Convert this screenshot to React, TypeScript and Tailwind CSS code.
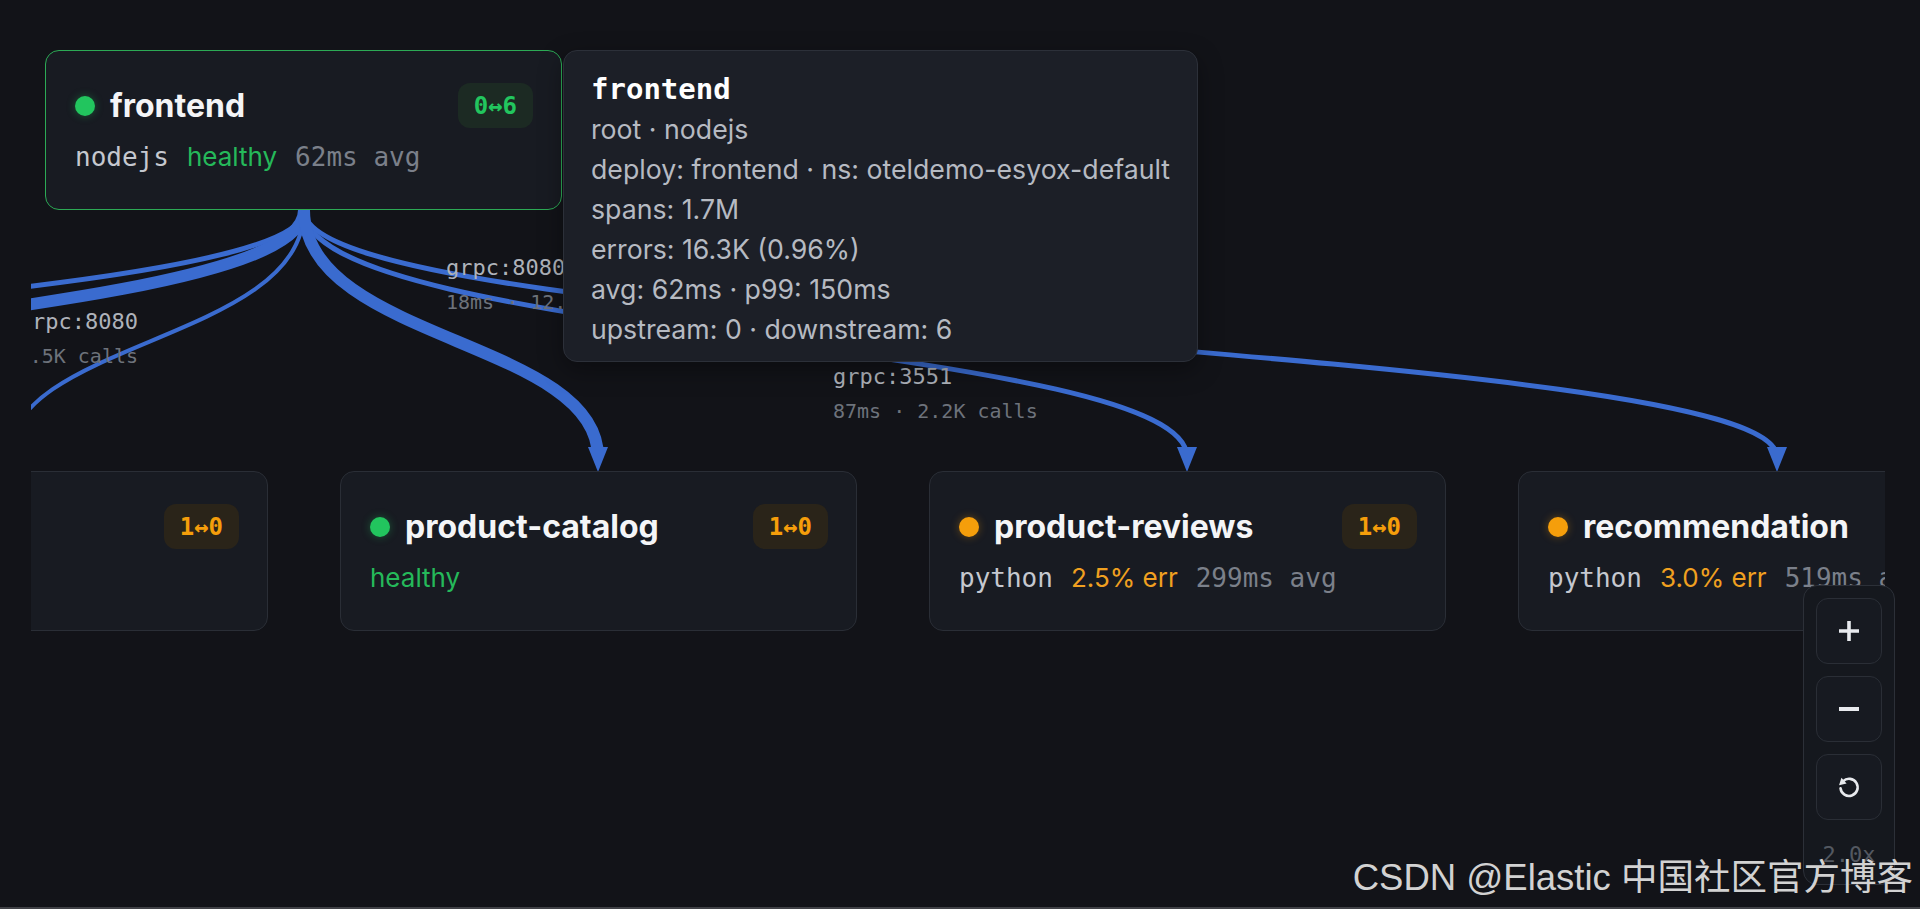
import React from "react";

type Tone = "ok" | "warn";

type Part = { text: string; kind: "mono" | "dim" | "ok" | "warn" };

interface NodeData {
  name: string;
  pos: string;
  status: Tone;
  badge: string;
  badgeTone: Tone;
  parts: Part[];
  active?: boolean;
}

const MONO = "font-['DejaVu_Sans_Mono',monospace]";

// source handle sits under the frontend card
const SX = 304;
const SY = 210;
const TY = 471;

const edges = [
  { tx: -1500, w: 5 },
  { tx: -800, w: 12 },
  { tx: 9, w: 4 },
  { tx: 1187, w: 5 },
  { tx: 1777, w: 5 },
  { tx: 598, w: 12 },
];

const arrows = [9, 598, 1187, 1777];

function edgePath(tx: number) {
  const my = (SY + TY) / 2;
  return `M${SX},${SY} C${SX},${my} ${tx},${my} ${tx},${TY - 14}`;
}

const nodes: NodeData[] = [
  {
    name: "frontend",
    pos: "left-[45px] top-[50px]",
    status: "ok",
    badge: "0↔6",
    badgeTone: "ok",
    active: true,
    parts: [
      { text: "nodejs", kind: "mono" },
      { text: "healthy", kind: "ok" },
      { text: "62ms avg", kind: "dim" },
    ],
  },
  {
    name: "ad",
    pos: "left-[-249px] top-[471px]",
    status: "warn",
    badge: "1↔0",
    badgeTone: "warn",
    parts: [
      { text: "java", kind: "mono" },
      { text: "healthy", kind: "ok" },
    ],
  },
  {
    name: "product-catalog",
    pos: "left-[340px] top-[471px]",
    status: "ok",
    badge: "1↔0",
    badgeTone: "warn",
    parts: [{ text: "healthy", kind: "ok" }],
  },
  {
    name: "product-reviews",
    pos: "left-[929px] top-[471px]",
    status: "warn",
    badge: "1↔0",
    badgeTone: "warn",
    parts: [
      { text: "python", kind: "mono" },
      { text: "2.5% err", kind: "warn" },
      { text: "299ms avg", kind: "dim" },
    ],
  },
  {
    name: "recommendation",
    pos: "left-[1518px] top-[471px]",
    status: "warn",
    badge: "1↔0",
    badgeTone: "warn",
    parts: [
      { text: "python", kind: "mono" },
      { text: "3.0% err", kind: "warn" },
      { text: "519ms avg", kind: "dim" },
    ],
  },
];

const partClass: Record<Part["kind"], string> = {
  mono: `${MONO} text-[#c5c8cf]`,
  dim: `${MONO} text-[#7b808a]`,
  ok: "text-[#25b95a]",
  warn: "text-[#f0a020]",
};

function ServiceNode({ node }: { node: NodeData }) {
  return (
    <div
      className={`absolute ${node.pos} flex h-[160px] w-[517px] flex-col rounded-[14px] border-[1.5px] bg-[#181b22] pl-[29px] pr-[28px] pt-[32px] ${
        node.active ? "border-[#2caa55]" : "border-[#2a2e36]"
      }`}
    >
      <div className="flex h-[45px] items-center">
        <span
          className={`h-[20px] w-[20px] shrink-0 rounded-full ${
            node.status === "ok"
              ? "bg-[#22c55e] shadow-[0_0_8px_rgba(34,197,94,0.35)]"
              : "bg-[#f59e0b] shadow-[0_0_8px_rgba(245,158,11,0.35)]"
          }`}
        />
        <span className="ml-[15px] whitespace-nowrap text-[32px] font-bold leading-none text-[#f4f5f7]">
          {node.name}
        </span>
        <span
          className={`ml-auto flex h-[45px] items-center rounded-[12px] px-[16px] ${MONO} text-[24px] font-bold ${
            node.badgeTone === "ok"
              ? "bg-[#1c2a23] text-[#22c55e]"
              : "bg-[#2a2419] text-[#f59e0b]"
          }`}
        >
          {node.badge}
        </span>
      </div>
      <div className="mt-[13px] flex items-center gap-[18px] whitespace-nowrap text-[26px] leading-[32px]">
        {node.parts.map((p) => (
          <span key={p.text} className={partClass[p.kind]}>
            {p.text}
          </span>
        ))}
      </div>
    </div>
  );
}

function EdgeLabel({
  pos,
  top,
  bottom,
  align = "left",
}: {
  pos: string;
  top: string;
  bottom: string;
  align?: "left" | "right";
}) {
  return (
    <div
      className={`absolute ${pos} whitespace-nowrap ${MONO} ${
        align === "right" ? "text-right" : "text-left"
      }`}
    >
      <div className="text-[22px] leading-[35px] text-[#aeb2ba]">{top}</div>
      <div className="text-[20px] leading-[35px] text-[#6d727b]">{bottom}</div>
    </div>
  );
}

const tooltipLines = [
  "root · nodejs",
  "deploy: frontend · ns: oteldemo-esyox-default",
  "spans: 1.7M",
  "errors: 16.3K (0.96%)",
  "avg: 62ms · p99: 150ms",
  "upstream: 0 · downstream: 6",
];

function ZoomButton({ children }: { children: React.ReactNode }) {
  return (
    <button className="flex h-[66px] w-full items-center justify-center rounded-[12px] border border-[#2a2e36] bg-[#171a21]">
      {children}
    </button>
  );
}

export default function App() {
  return (
    <div className="relative flex h-[909px] w-[1920px] flex-col overflow-hidden bg-[#121318] font-['Inter',sans-serif]">
      <div className="flex flex-1">
        <div className="w-[31px] shrink-0" />
        {/* canvas viewport */}
        <div className="relative flex-1 overflow-hidden">
          <div className="absolute left-[-31px] top-0 h-full w-[1920px]">
            <svg
              className="absolute left-0 top-0"
              width={1920}
              height={907}
              viewBox="0 0 1920 907"
              overflow="visible"
            >
              {edges.map((e) => (
                <path
                  key={e.tx}
                  d={edgePath(e.tx)}
                  fill="none"
                  stroke="#3a6bcf"
                  strokeWidth={e.w}
                />
              ))}
              {arrows.map((tx) => (
                <polygon
                  key={tx}
                  points={`${tx - 10},447 ${tx + 10},447 ${tx},472`}
                  fill="#3a6bcf"
                />
              ))}
            </svg>

            <EdgeLabel
              pos="left-[-162px] top-[304px] w-[300px]"
              top="grpc:8080"
              bottom="6ms · 4.5K calls"
              align="right"
            />
            <EdgeLabel pos="left-[446px] top-[250px]" top="grpc:8080" bottom="18ms · 12.5K calls" />
            <EdgeLabel pos="left-[833px] top-[359px]" top="grpc:3551" bottom="87ms · 2.2K calls" />

            {nodes.map((n) => (
              <ServiceNode key={n.name} node={n} />
            ))}

            {/* hover tooltip for frontend */}
            <div className="absolute left-[563px] top-[50px] h-[312px] w-[635px] rounded-[14px] border border-[#2c3039] bg-[#1c1f27] pl-[27px] pt-[18px] shadow-[0_8px_24px_rgba(0,0,0,0.35)]">
              <div className={`${MONO} text-[29px] font-bold leading-[40px] text-white`}>frontend</div>
              {tooltipLines.map((l) => (
                <div key={l} className="whitespace-nowrap text-[26.7px] leading-[40px] text-[#b6bac2]">
                  {l}
                </div>
              ))}
            </div>
          </div>
        </div>
        <div className="w-[35px] shrink-0" />
      </div>
      <div className="h-[2px] shrink-0 bg-[#404146]" />

      {/* zoom controls */}
      <div className="absolute left-[1803px] top-[585px] flex w-[92px] flex-col gap-[12px] rounded-[14px] border border-[#2c3038] bg-[#15181e] p-[12px] pb-[16px]">
        <ZoomButton>
          <svg width="22" height="22" viewBox="0 0 22 22">
            <path d="M11 1V21M1 11H21" stroke="#e8eaee" strokeWidth="3.6" />
          </svg>
        </ZoomButton>
        <ZoomButton>
          <svg width="22" height="22" viewBox="0 0 22 22">
            <path d="M1 11H21" stroke="#e8eaee" strokeWidth="4" />
          </svg>
        </ZoomButton>
        <ZoomButton>
          <svg width="26" height="26" viewBox="0 0 24 24" fill="none">
            <path
              d="M6.6 6.6A7.9 7.9 0 1 1 4.2 13.2"
              stroke="#e8eaee"
              strokeWidth="2.4"
              strokeLinecap="round"
            />
            <path d="M2.8 10.4L9.8 8.8L5 3.4Z" fill="#e8eaee" />
          </svg>
        </ZoomButton>
        <div className={`h-[36px] pt-[10px] text-center ${MONO} text-[22px] leading-[26px] text-[#535861]`}>
          2.0x
        </div>
      </div>

      {/* watermark */}
      <div className="absolute bottom-[13px] right-[7px] whitespace-nowrap font-['Liberation_Sans','Noto_Sans_CJK_SC',sans-serif] text-[36.5px] leading-none text-[#d2d2d2]">
        CSDN @Elastic 中国社区官方博客
      </div>
    </div>
  );
}
